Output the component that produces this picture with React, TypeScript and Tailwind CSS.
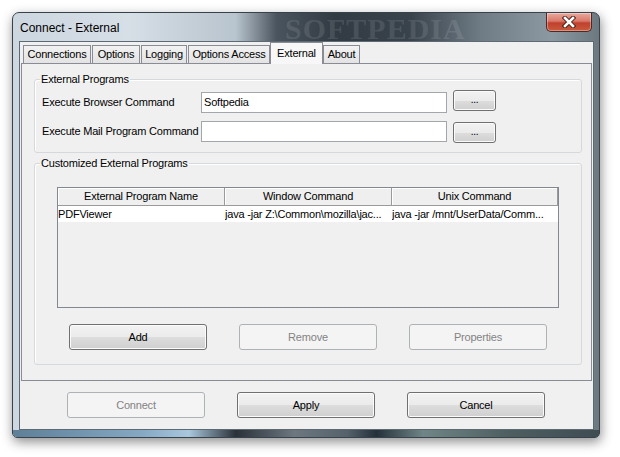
import React from 'react'

const tabs = [
  { label: 'Connections', cls: 'ml-[3px] w-[68px]' },
  { label: 'Options', cls: 'ml-[1px] w-[48px]' },
  { label: 'Logging', cls: 'ml-[1px] w-[46px]' },
  { label: 'Options Access', cls: 'ml-[1px] w-[82px]' },
  { label: 'External', cls: 'w-[53px]', active: true },
  { label: 'About', cls: 'w-[37px]' },
]

function Btn({ label, disabled, className = '' }: { label: string; disabled?: boolean; className?: string }) {
  const base = 'flex items-center justify-center rounded-[3px] border'
  const look = disabled
    ? 'border-[#adb2b5] bg-[#f4f4f4] text-[#838383]'
    : 'border-[#707070] bg-[linear-gradient(180deg,#f2f2f2_0%,#ebebeb_50%,#dddddd_51%,#cfcfcf_100%)] shadow-[inset_0_0_0_1px_#fbfbfb] text-black'
  return <div className={`${base} ${look} ${className}`}>{label}</div>
}

function CloseButton() {
  return (
    <div className="mr-[7px] flex h-[19px] w-[46px] items-center justify-center rounded-b-[5px] border border-t-0 border-[#4a2a26] bg-[linear-gradient(180deg,#e9a99c_0%,#d9796a_45%,#c1402e_55%,#c85a3c_100%)] shadow-[inset_0_0_0_1px_rgba(255,255,255,0.35)]">
      <svg width="14" height="12" viewBox="0 0 14 12">
        <path d="M3 2 L11 10 M11 2 L3 10" stroke="#4a1e16" strokeWidth="4.5" strokeLinecap="square" />
        <path d="M3 2 L11 10 M11 2 L3 10" stroke="#ffffff" strokeWidth="2.6" strokeLinecap="square" />
      </svg>
    </div>
  )
}

function Row({ label, value, inputTop, btnTop, className = '' }: { label: string; value: string; inputTop: string; btnTop: string; className?: string }) {
  return (
    <div className={`flex items-start pl-[7px] ${className}`}>
      <div className={`w-[159px] leading-[21px] ${inputTop}`}>{label}</div>
      <div className={`h-[21px] w-[246px] border border-[#a3a6ab] bg-white pl-[2px] leading-[19px] ${inputTop}`}>{value}</div>
      <Btn label="..." className={`ml-[6px] h-[21px] w-[43px] pb-[3px] text-[10px] ${btnTop}`} />
    </div>
  )
}

export default function App() {
  return (
    <div className="h-[457px] w-[620px] overflow-hidden bg-white pl-[12px] pt-[12px] font-['Liberation_Sans',Arial,sans-serif] text-[11px] tracking-[-0.2px] text-black">
      <div className="relative flex h-[426px] w-[588px] flex-col rounded-t-[7px] rounded-b-[5px] border border-[#37424c] bg-[linear-gradient(90deg,#cdd7e0_0%,#d6dee6_20%,#b8c4ce_38%,#4a545e_45%,#323b44_55%,#39434c_68%,#6f7c86_80%,#8d99a2_92%,#6b7880_100%)] shadow-[1px_4px_12px_rgba(0,0,0,0.45)]">
        {/* title bar */}
        <div className="relative flex h-[28px] items-start justify-between">
          <span className="pl-[7px] pt-[6px] text-[12px] tracking-normal">Connect - External</span>
          <span className="absolute left-[272px] top-[1px] font-['Liberation_Serif',serif] text-[30px] font-bold leading-[30px] tracking-[1px] text-white/10 blur-[0.6px]">SOFTPEDIA</span>
          <CloseButton />
        </div>

        {/* client area */}
        <div className="ml-[6px] flex h-[389px] w-[575px] flex-col border border-[#5d6a74] bg-[#f0f0f0]">
          {/* tabs */}
          <div className="flex h-[21px] items-end">
            {tabs.map(t =>
              t.active ? (
                <div key={t.label} className={`${t.cls} relative z-10 -mb-[1px] flex h-[22px] items-start justify-center border border-b-0 border-[#898c95] bg-[#f7f7f7] pt-[2px]`}>
                  {t.label}
                </div>
              ) : (
                <div key={t.label} className={`${t.cls} flex h-[18px] items-center justify-center border border-b-0 border-[#898c95] bg-[linear-gradient(180deg,#f2f2f2,#e3e3e3)]`}>
                  {t.label}
                </div>
              )
            )}
          </div>

          {/* tab panel */}
          <div className="mx-[1px] h-[318px] border border-[#898c95] bg-[#f0f0f0] pt-[7px]">
            <fieldset className="ml-[12px] w-[548px] rounded-[3px] border border-[#d5d9dc] px-0 pb-[9px] pt-[3px] shadow-[inset_1px_1px_0_#fff]">
              <legend className="ml-[5px] px-[1px] leading-[16px]">External Programs</legend>
              <Row label="Execute Browser Command" value="Softpedia" inputTop="mt-[2px]" btnTop="" />
              <Row label="Execute Mail Program Command" value="" inputTop="" btnTop="mt-[1px]" className="mt-[8px]" />
            </fieldset>

            <fieldset className="ml-[12px] mt-[2px] w-[548px] rounded-[3px] border border-[#d5d9dc] px-0 pb-[14px] pt-[16px] shadow-[inset_1px_1px_0_#fff]">
              <legend className="ml-[5px] px-[1px] leading-[16px]">Customized External Programs</legend>
              <div className="ml-[22px] h-[121px] w-[502px] border border-[#828790] bg-[#f0f0f0]">
                <div className="flex h-[18px]">
                  {['External Program Name', 'Window Command', 'Unix Command'].map((h, i) => (
                    <div key={h} className={`${i === 2 ? 'w-[166px]' : 'w-[167px]'} flex items-center justify-center border-b border-r border-[#9a9a9a] bg-[#efefef] shadow-[inset_1px_1px_0_#ffffff]`}>
                      {h}
                    </div>
                  ))}
                </div>
                <div className="flex h-[16px] items-center bg-white whitespace-nowrap">
                  <div className="w-[167px] overflow-hidden">PDFViewer</div>
                  <div className="w-[167px] overflow-hidden">java -jar Z:\Common\mozilla\jac...</div>
                  <div className="w-[166px] overflow-hidden">java -jar /mnt/UserData/Comm...</div>
                </div>
              </div>
              <div className="ml-[34px] mt-[16px] flex gap-[32px]">
                <Btn label="Add" className="h-[26px] w-[138px]" />
                <Btn label="Remove" disabled className="h-[26px] w-[138px]" />
                <Btn label="Properties" disabled className="h-[26px] w-[138px]" />
              </div>
            </fieldset>
          </div>

          {/* dialog buttons */}
          <div className="ml-[47px] mt-[11px] flex gap-[32px]">
            <Btn label="Connect" disabled className="h-[26px] w-[138px]" />
            <Btn label="Apply" className="h-[26px] w-[138px]" />
            <Btn label="Cancel" className="h-[26px] w-[138px]" />
          </div>
        </div>

        {/* bottom frame */}
        <div className="h-[7px] rounded-b-[4px] bg-[linear-gradient(90deg,#5f7f98_0%,#86a8c3_22%,#a9c7de_30%,#2a3138_38%,#6c7780_48%,#56626b_57%,#25303a_62%,#6f8586_70%,#4d5d60_85%,#3f4d52_100%)]" />
      </div>
    </div>
  )
}
